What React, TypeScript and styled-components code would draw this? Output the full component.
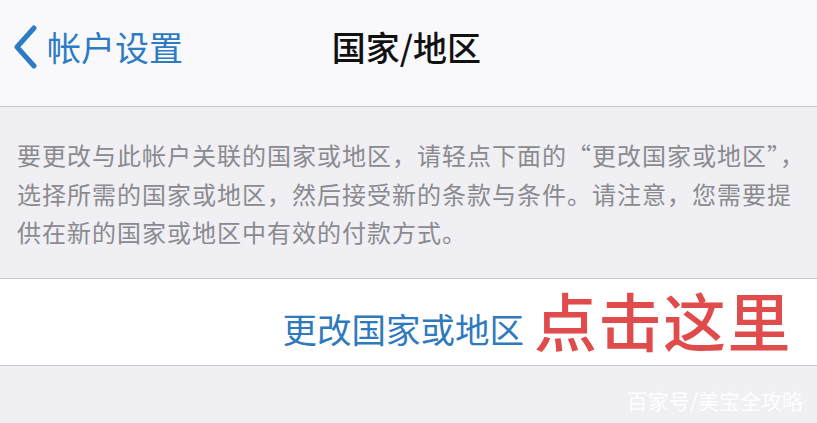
import React from "react";
import styled, { createGlobalStyle } from "styled-components";

const GlobalStyle = createGlobalStyle`
  html, body {
    margin: 0;
    padding: 0;
    background: #efeff4;
    font-family: "Noto Sans CJK SC", "Noto Sans", sans-serif;
  }
`;

const Page = styled.div`
  position: relative;
  width: 817px;
  height: 423px;
  overflow: hidden;
  background: #efeff4;
`;

const NavBar = styled.div`
  position: relative;
  height: 106px;
  background: #f9f9fb;
  border-bottom: 1px solid #c8c7cc;
  display: flex;
  align-items: center;
  justify-content: center;
`;

const BackButton = styled.div`
  position: absolute;
  left: 12px;
  top: 0;
  bottom: 12px;
  display: flex;
  align-items: center;
  gap: 9px;
  color: #2c7bc4;
  font-size: 34px;
  line-height: 1;
`;

const Title = styled.div`
  font-size: 34px;
  font-weight: 500;
  color: #111;
  margin-bottom: 12px;
  margin-right: 4px;
  line-height: 1;
`;

const Notice = styled.div`
  padding: 29px 8px 26px 17px;
  font-size: 24px;
  line-height: 38.5px;
  letter-spacing: 1px;
  color: #8a8a8f;
  white-space: nowrap;
`;

const ActionRow = styled.div`
  height: 86px;
  background: #ffffff;
  border-top: 1px solid #c8c7cc;
  border-bottom: 1px solid #c8c7cc;
  display: flex;
  align-items: center;
  justify-content: flex-end;
  gap: 10px;
  padding-right: 25px;
`;

const ActionLink = styled.span`
  font-size: 34.5px;
  color: #2f79bd;
  line-height: 1;
  margin-top: 14px;
`;

const Callout = styled.span`
  font-size: 63px;
  font-weight: 500;
  color: #e04b4b;
  line-height: 1;
  letter-spacing: 1.5px;
  text-shadow: 0 0 3px #ffffff, 0 0 6px rgba(255, 255, 255, 0.9);
  margin-bottom: 6px;
`;

const Watermark = styled.div`
  position: absolute;
  right: 14px;
  bottom: 12px;
  font-size: 21px;
  color: rgba(255, 255, 255, 0.95);
  line-height: 1;
`;

const Chevron = () => (
  <svg width="26" height="44" viewBox="0 0 26 44">
    <path
      d="M22 3 L5 22 L22 41"
      fill="none"
      stroke="#2c7bc4"
      strokeWidth="5"
      strokeLinecap="round"
      strokeLinejoin="round"
    />
  </svg>
);

export default function App() {
  return (
    <Page>
      <GlobalStyle />
      <NavBar>
        <BackButton>
          <Chevron />
          <span>帐户设置</span>
        </BackButton>
        <Title>国家/地区</Title>
      </NavBar>
      <Notice>
        要更改与此帐户关联的国家或地区，请轻点下面的“更改国家或地区”，
        <br />
        选择所需的国家或地区，然后接受新的条款与条件。请注意，您需要提
        <br />
        供在新的国家或地区中有效的付款方式。
      </Notice>
      <ActionRow>
        <ActionLink>更改国家或地区</ActionLink>
        <Callout>点击这里</Callout>
      </ActionRow>
      <Watermark>百家号/美宝全攻略</Watermark>
    </Page>
  );
}
